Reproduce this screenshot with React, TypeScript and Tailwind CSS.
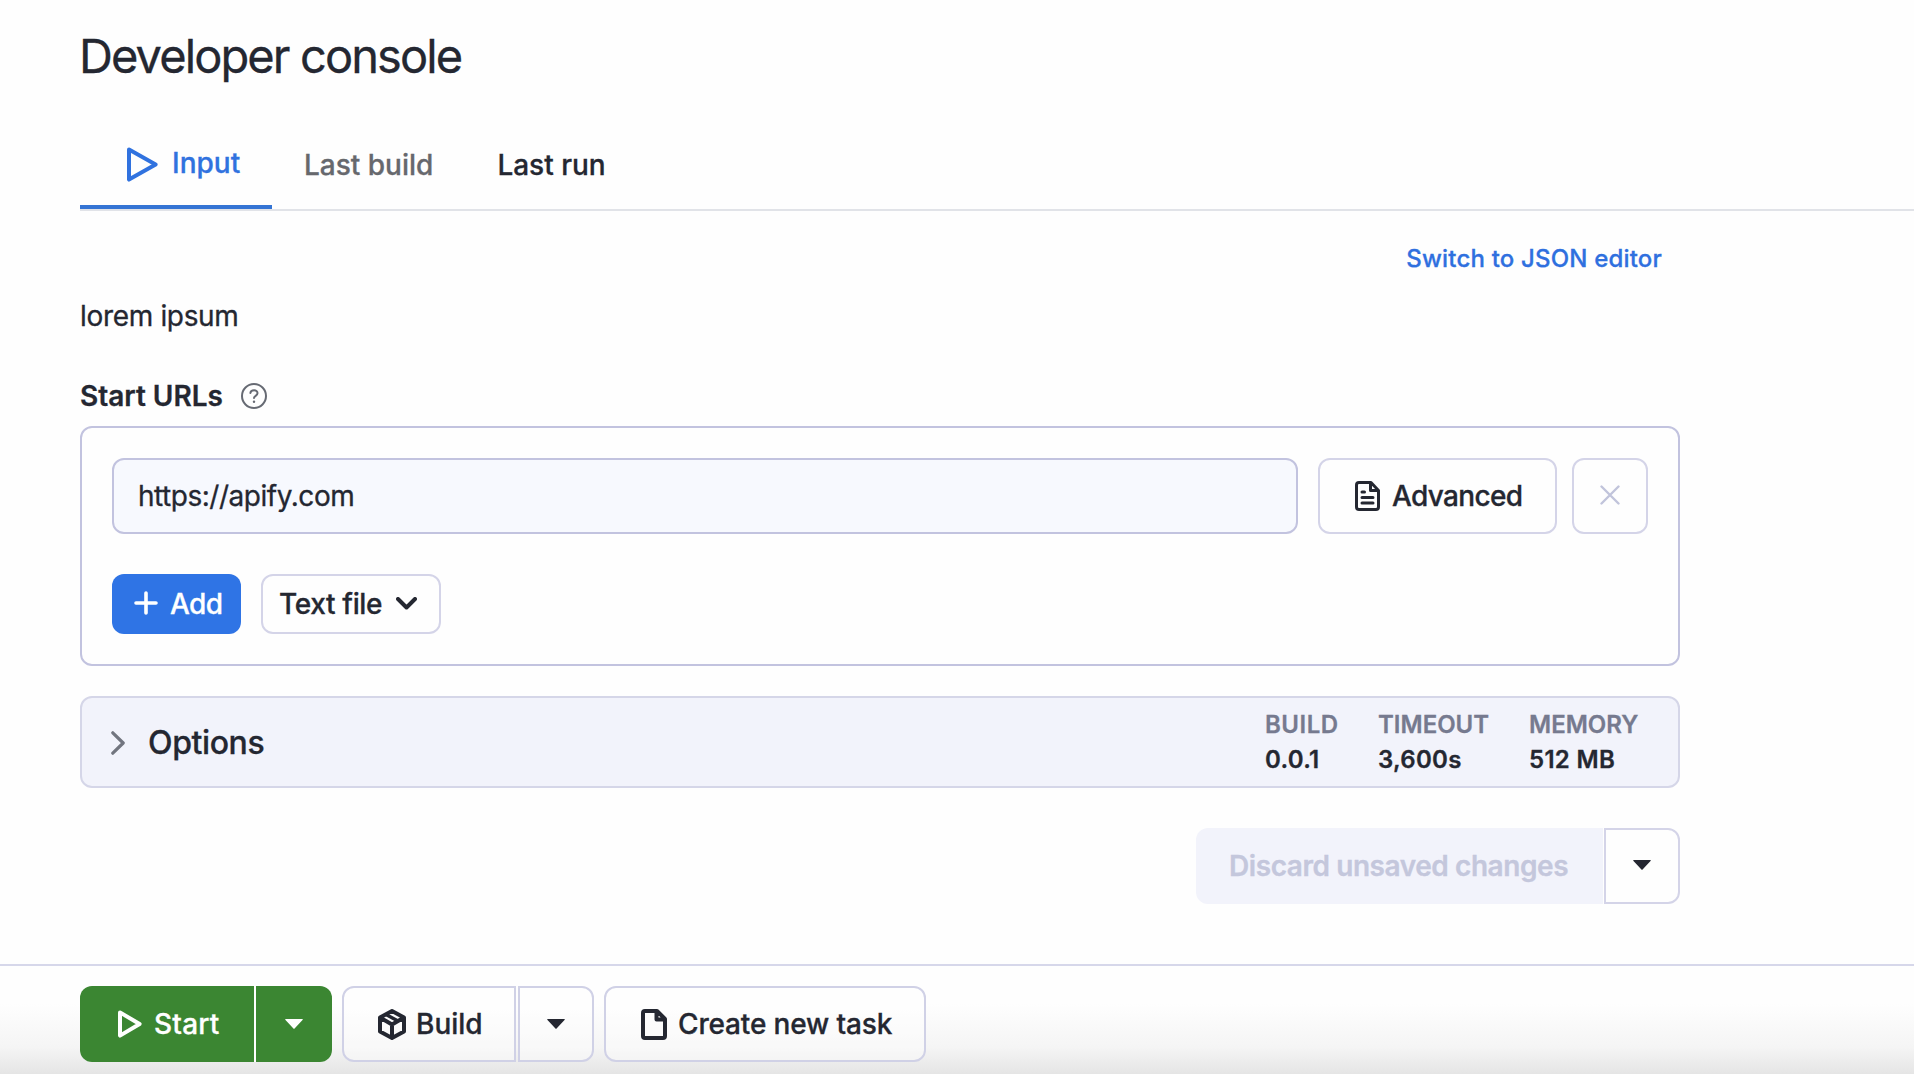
import { useState } from "react";

const T = ({ children, cls = "" }: { children: string; cls?: string }) => <span className={"whitespace-nowrap " + cls}>{children}</span>;

function Caret({ cls = "" }: { cls?: string }) {
  return (
    <svg width="18" height="10" viewBox="0 0 18 10" fill="currentColor" className={cls}>
      <path d="M0.8 0H17.2Q18.4 0 17.5 1L9.8 9.3Q9 10.3 8.2 9.3L0.5 1Q-0.4 0 0.8 0Z" />
    </svg>
  );
}

function Play({ w, h, s }: { w: number; h: number; s: number }) {
  return (
    <svg width={w} height={h} viewBox={`0 0 ${w} ${h}`} fill="none" stroke="currentColor" strokeWidth={s} strokeLinejoin="round" className="shrink-0">
      <path d={`M${s / 2} ${s / 2 + 0.4}L${w - s / 2 - 0.4} ${h / 2}L${s / 2} ${h - s / 2 - 0.4}Z`} />
    </svg>
  );
}

function Stat({ label, value, cls, labelCls = "" }: { label: string; value: string; cls: string; labelCls?: string }) {
  return (
    <div className={"flex flex-col text-[24px] leading-[35px] font-semibold " + cls}>
      <T cls={"text-[#767a8f] " + labelCls}>{label}</T>
      <T cls="tracking-[0.3px]">{value}</T>
    </div>
  );
}

export default function App() {
  const [url, setUrl] = useState("https://apify.com");
  return (
    <div className="flex h-[1074px] w-[1914px] flex-col overflow-hidden bg-[#fefefe] font-['Inter',sans-serif] text-[28px] leading-9 text-[#242731] [-webkit-text-stroke:0.3px]">
      <h1 className="mt-7 h-14 pl-[79px] text-[47px] leading-[56px] tracking-[-1.9px]"><T>Developer console</T></h1>

      <nav className="mt-9 ml-20 flex h-[91px] border-b-2 border-[#e1e3e8] font-medium">
        <button className="flex h-[89px] w-48 items-center border-b-4 border-[#3474d4] pt-1 pl-[47px] text-[#3072df]">
          <Play w={31} h={35} s={4} />
          <T cls="ml-[14px] -mt-1">Input</T>
        </button>
        <button className="h-[89px] pl-8 text-[#66686d]"><T>Last build</T></button>
        <button className="h-[89px] pl-16"><T>Last run</T></button>
      </nav>

      <main className="ml-20 flex w-[1600px] flex-col">
        <div className="flex h-[96px] justify-end pt-[29px] pr-[18px] text-[24px] leading-[38px] font-medium tracking-[0.18px] text-[#2f70df]"><a><T>Switch to JSON editor</T></a></div>
        <p className="-mt-px h-[55px] leading-[20px] tracking-[-0.33px]"><T>lorem ipsum</T></p>

        <div className="mt-[17px] flex h-[48px] items-start">
          <T cls="leading-9 font-semibold">Start URLs</T>
          <svg width="26" height="26" viewBox="0 0 26 26" fill="none" stroke="#666a73" strokeWidth="2" strokeLinecap="round" className="mt-[5px] ml-[18px]">
            <circle cx="13" cy="13" r="12" />
            <path d="M9.4 10C9.8 6.2 16.6 6.2 16.5 10.2C16.5 12.8 13 12.8 13 15" />
            <path d="M13 18.6V18.7" strokeWidth="2.4" />
          </svg>
        </div>

        <section className="h-[240px] rounded-xl border-2 border-[#c2c3df] p-[30px]">
          <div className="flex h-[76px]">
            <input value={url} onChange={(e) => setUrl(e.target.value)} className="w-[1186px] rounded-xl border-2 border-[#c2c3df] bg-[#f7f9fe] pl-6 tracking-[-0.47px] outline-none" />
            <button className="ml-5 flex w-[239px] items-center rounded-xl border-2 border-[#d4d4e8] pl-[35px] font-[550]">
              <svg width="25" height="30" viewBox="0 0 25 30" fill="none" stroke="currentColor" strokeWidth="3" strokeLinecap="round" strokeLinejoin="round">
                <path d="M16 1.5H4Q1.5 1.5 1.5 4V26Q1.5 28.5 4 28.5H21Q23.5 28.5 23.5 26V9.5ZM15.5 2V9.5H23M7 11H9.5M7 16.5H18M7 22H18" />
              </svg>
              <T cls="ml-3 tracking-[-0.65px]">Advanced</T>
            </button>
            <button className="ml-[15px] flex w-[76px] items-center justify-center rounded-xl border-2 border-[#d4d4e8]">
              <svg width="20" height="20" viewBox="0 0 20 20" fill="none" stroke="#c1c4db" strokeWidth="2.4" strokeLinecap="round" className="-mt-[2px]"><path d="M1.5 1.5L18.5 18.5M18.5 1.5L1.5 18.5" /></svg>
            </button>
          </div>
          <div className="mt-10 flex h-[60px] font-[550]">
            <button className="flex w-[129px] items-center rounded-xl bg-[#2f74e5] pl-[22px] text-white">
              <svg width="24" height="24" viewBox="0 0 24 24" fill="none" stroke="currentColor" strokeWidth="3.6" strokeLinecap="round" className="-mt-[2px]"><path d="M12 2V22M2 12H22" /></svg>
              <T cls="ml-3 tracking-[-0.6px]">Add</T>
            </button>
            <button className="ml-5 flex w-[180px] items-center rounded-xl border-2 border-[#d4d4e8] pl-4">
              <T cls="tracking-[-0.35px]">Text file</T>
              <svg width="21" height="13" viewBox="0 0 21 13" fill="none" stroke="currentColor" strokeWidth="4" strokeLinecap="round" strokeLinejoin="round" className="-mt-[2px] ml-[14px]"><path d="M2 2L10.5 10.5L19 2" /></svg>
            </button>
          </div>
        </section>

        <section className="mt-[30px] flex h-[92px] items-center rounded-xl border-2 border-[#d5d6e8] bg-[#f2f3fb] pl-[29px]">
          <svg width="14" height="24" viewBox="0 0 14 24" fill="none" stroke="#72757f" strokeWidth="3.2" strokeLinecap="round" strokeLinejoin="round" className="mt-[2px]"><path d="M1.8 1.8L12.2 12L1.8 22.2" /></svg>
          <T cls="ml-[23px] pt-[2px] text-[32px] font-[550] tracking-[-0.4px]">Options</T>
          <div className="ml-auto flex">
            <Stat label="BUILD" value="0.0.1" cls="w-[113px]" labelCls="tracking-[0.5px]" />
            <Stat label="TIMEOUT" value="3,600s" cls="w-[151px]" />
            <Stat label="MEMORY" value="512 MB" cls="w-[149px]" />
          </div>
        </section>

        <div className="mt-10 flex h-[76px] justify-end">
          <button className="w-[407px] rounded-l-xl bg-[#f2f3fb] pl-[33px] text-left font-semibold tracking-[-0.43px] text-[#c4c7dc]"><T>Discard unsaved changes</T></button>
          <button className="ml-px flex w-[76px] items-center justify-center rounded-r-xl border-2 border-[#d4d4e8]"><Caret cls="-mt-[2px]" /></button>
        </div>
      </main>

      <footer className="mt-[60px] flex h-[110px] border-t-2 border-[#d6d7ea] bg-linear-to-b from-[#fefefe] from-35% via-[#f5f5f5] via-75% to-[#e5e5e5] pt-5 pl-20 font-[550]">
        <div className="flex h-[76px] gap-[2px] rounded-xl bg-white text-white">
          <button className="flex w-[174px] items-center rounded-l-xl bg-[#3b8632] pl-[38px]">
            <Play w={24} h={28} s={4} />
            <T cls="ml-3 tracking-[0.2px]">Start</T>
          </button>
          <button className="flex w-[76px] items-center justify-center rounded-r-xl bg-[#3b8632]"><Caret /></button>
        </div>
        <div className="ml-[10px] flex h-[76px] gap-[2px]">
          <button className="flex w-[174px] items-center rounded-l-xl border-2 border-[#d0d1e6] bg-white/40 pl-[34px]">
            <svg width="28" height="31" viewBox="0 0 28 31" fill="none" stroke="currentColor" strokeWidth="4" strokeLinejoin="round">
              <path d="M14 2L26 8.5V22.5L14 29L2 22.5V8.5ZM2 8.5L14 15.5L26 8.5M14 15.5V29" />
              <path d="M8 5.5L20 12" strokeWidth="3.4" />
            </svg>
            <T cls="ml-[10px]">Build</T>
          </button>
          <button className="flex w-[76px] items-center justify-center rounded-r-xl border-2 border-[#d0d1e6] bg-white/40"><Caret /></button>
        </div>
        <button className="ml-[10px] flex h-[76px] w-[322px] items-center rounded-xl border-2 border-[#d0d1e6] bg-white/40 pl-[35px]">
          <svg width="26" height="31" viewBox="0 0 26 31" fill="none" stroke="currentColor" strokeWidth="4" strokeLinejoin="round">
            <path d="M16 2H4Q2 2 2 4V27Q2 29 4 29H22Q24 29 24 27V10ZM15.5 2V10.5H24" />
          </svg>
          <T cls="ml-[11px] tracking-[-0.15px]">Create new task</T>
        </button>
      </footer>
    </div>
  );
}
